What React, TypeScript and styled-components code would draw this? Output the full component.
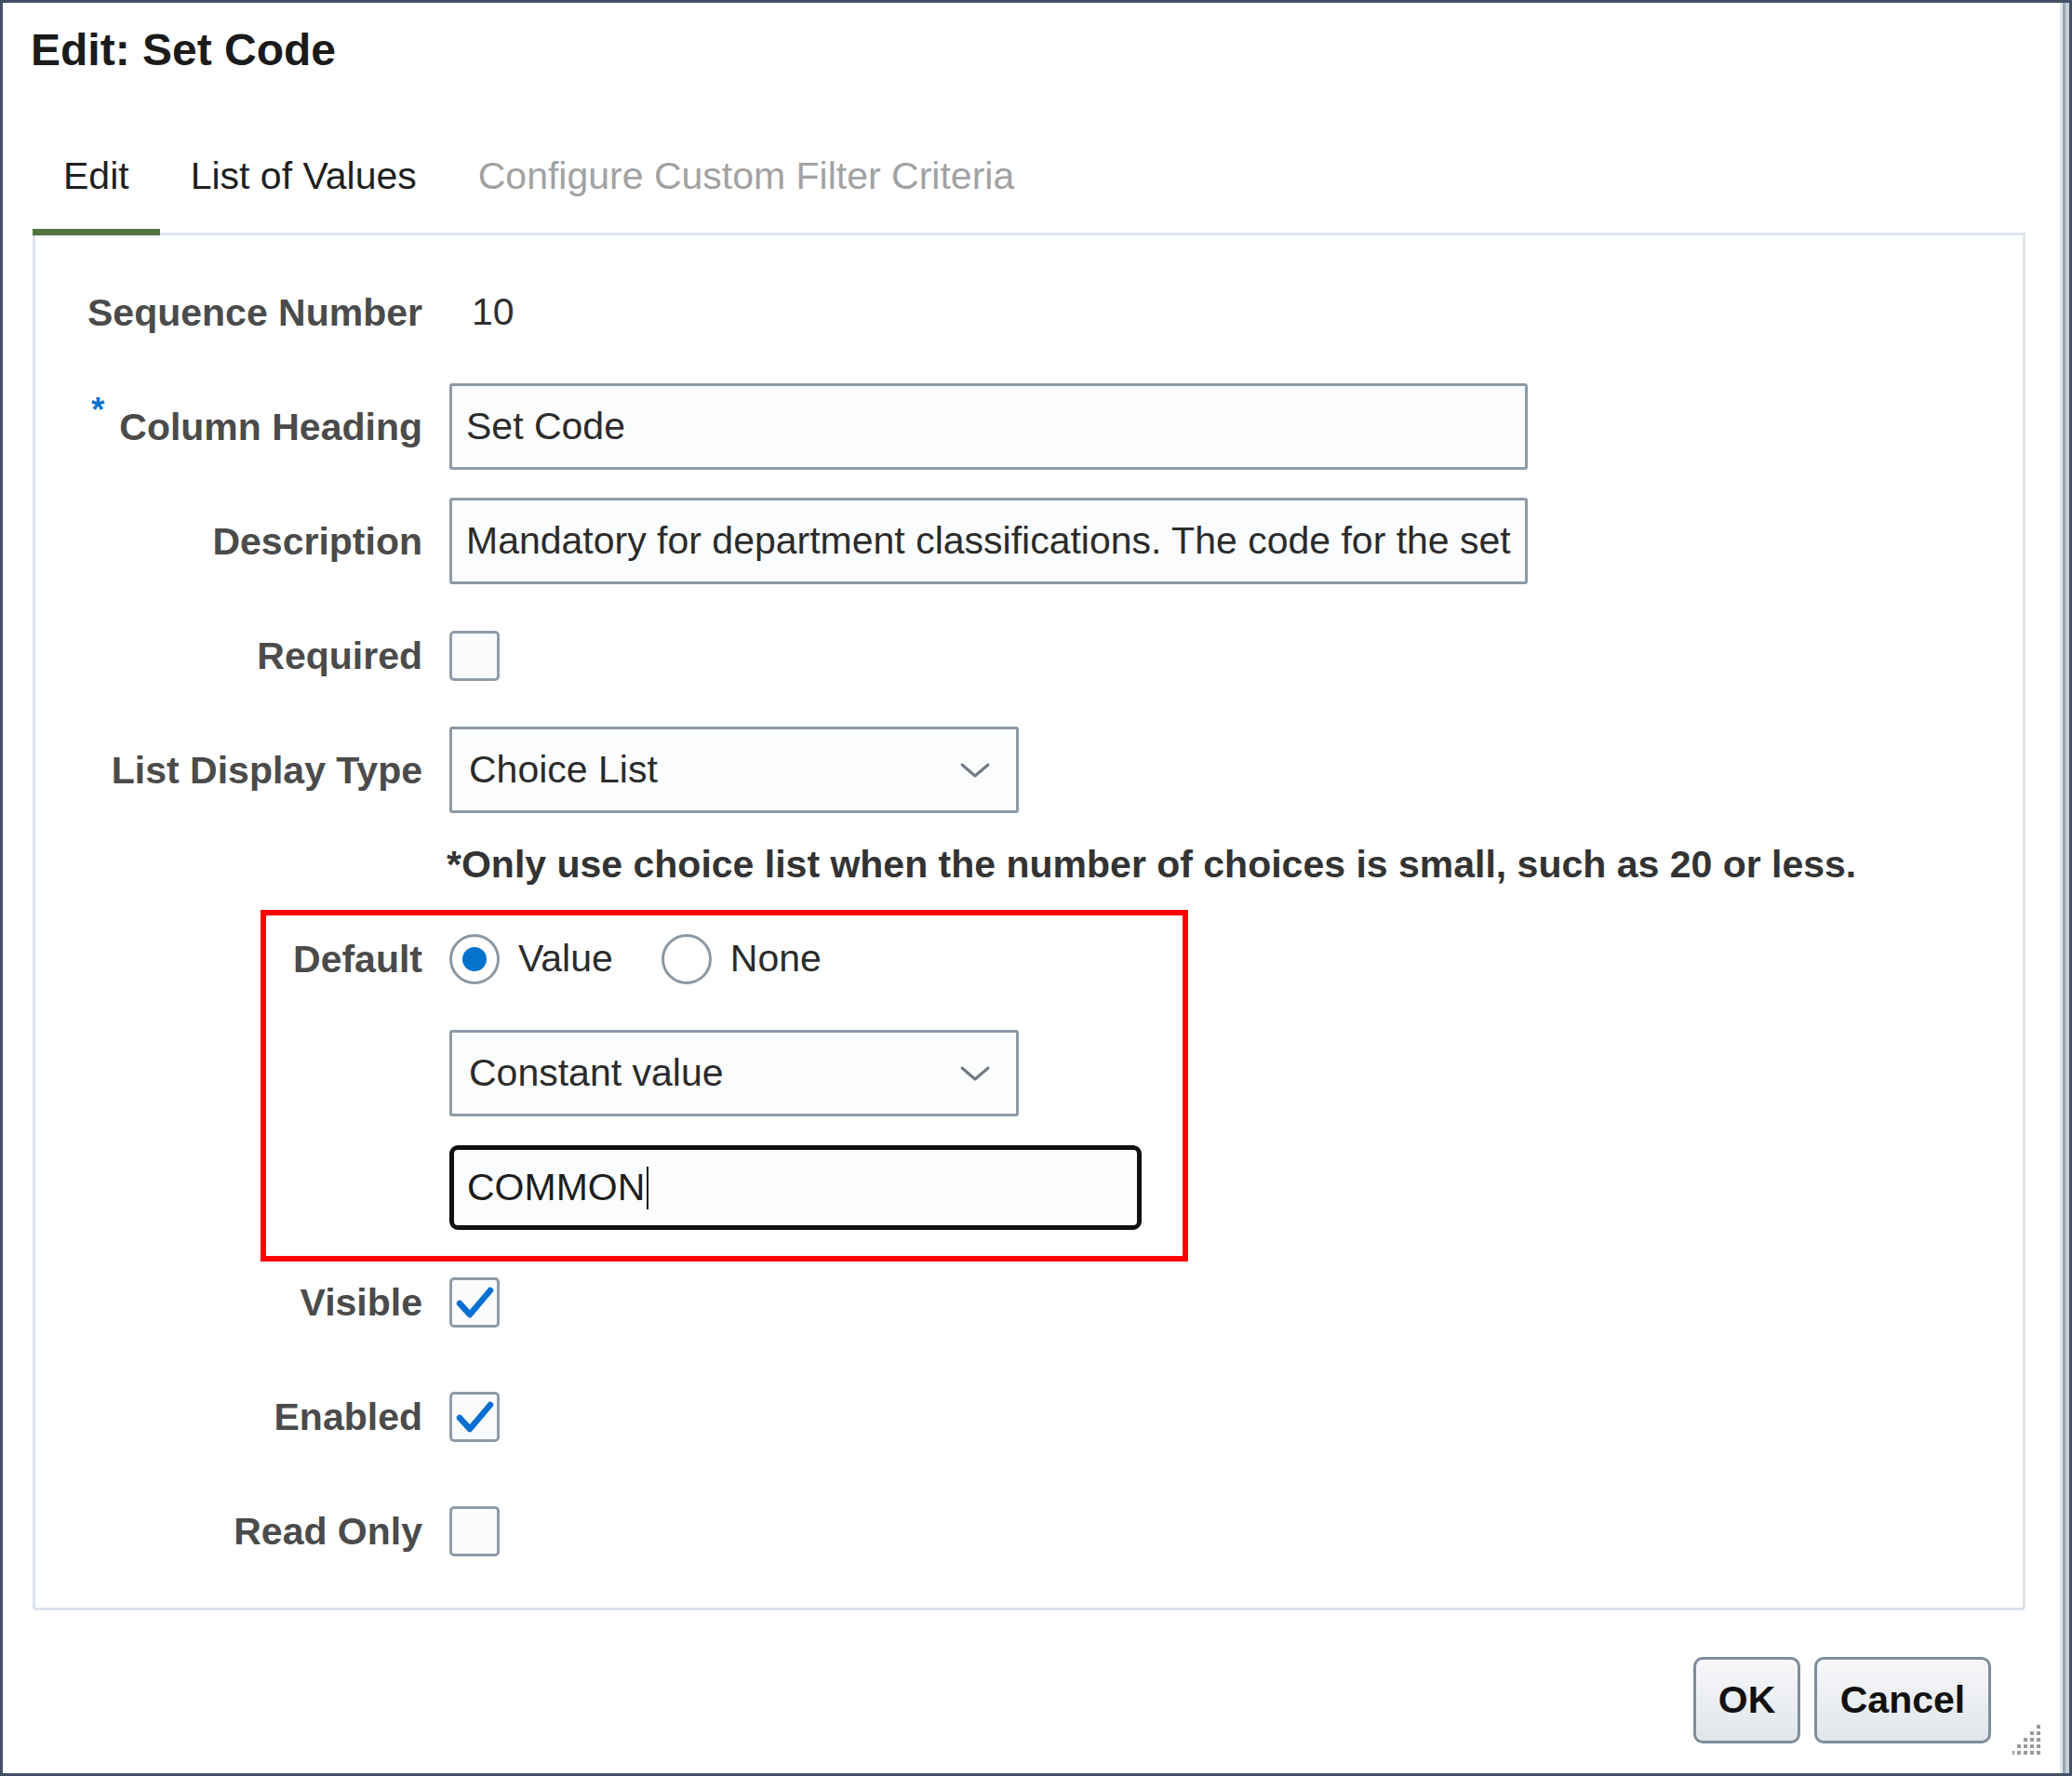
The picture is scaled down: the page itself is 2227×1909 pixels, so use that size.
import React from "react";
import styled, { createGlobalStyle } from "styled-components";

const GlobalStyle = createGlobalStyle`
  html, body {
    margin: 0;
    padding: 0;
    background: #ffffff;
  }
  body {
    font-family: "Liberation Sans", Arial, sans-serif;
  }
`;

const tabs = [
  { label: "Edit", active: true, disabled: false },
  { label: "List of Values", active: false, disabled: false },
  { label: "Configure Custom Filter Criteria", active: false, disabled: true }
];

const App = () => {
  return (
    <>
      <GlobalStyle />
      <Frame>
        <Title>Edit: Set Code</Title>

        <TabBar>
          {tabs.map((tab) => (
            <Tab key={tab.label} $active={tab.active} $disabled={tab.disabled}>
              {tab.label}
            </Tab>
          ))}
        </TabBar>

        <Panel>
          <Row>
            <Label>Sequence Number</Label>
            <Value>10</Value>
          </Row>

          <Row>
            <Label>
              <Required>*</Required>Column Heading
            </Label>
            <TextBox>Set Code</TextBox>
          </Row>

          <Row>
            <Label>Description</Label>
            <TextBox>
              Mandatory for department classifications. The code for the set
            </TextBox>
          </Row>

          <Row>
            <Label>Required</Label>
            <Checkbox checked={false} />
          </Row>

          <Row>
            <Label>List Display Type</Label>
            <Select>
              Choice List
              <Chevron />
            </Select>
          </Row>

          <NoteRow>
            <Label />
            <Note>
              *Only use choice list when the number of choices is small, such as
              20 or less.
            </Note>
          </NoteRow>

          {/* 빨간 박스로 강조된 기본값 영역 */}
          <DefaultGroup>
            <Highlight />
            <Row>
              <Label>Default</Label>
              <RadioGroup>
                <RadioOption>
                  <RadioCircle $selected />
                  Value
                </RadioOption>
                <RadioOption>
                  <RadioCircle $selected={false} />
                  None
                </RadioOption>
              </RadioGroup>
            </Row>
            <Row>
              <Label />
              <Select>
                Constant value
                <Chevron />
              </Select>
            </Row>
            <Row>
              <Label />
              <FocusedInput>
                COMMON
                <Caret />
              </FocusedInput>
            </Row>
          </DefaultGroup>

          <Row>
            <Label>Visible</Label>
            <Checkbox checked />
          </Row>

          <Row>
            <Label>Enabled</Label>
            <Checkbox checked />
          </Row>

          <Row>
            <Label>Read Only</Label>
            <Checkbox checked={false} />
          </Row>
        </Panel>

        <Footer>
          <Button $width={115}>OK</Button>
          <Button $width={190}>Cancel</Button>
          <Grip />
        </Footer>
      </Frame>
    </>
  );
};

export default App;

const Chevron = () => (
  <svg width="34" height="20" viewBox="0 0 34 20">
    <polyline
      points="3,4 17,16 31,4"
      fill="none"
      stroke="#6f7a85"
      strokeWidth="3"
      strokeLinecap="round"
      strokeLinejoin="round"
    />
  </svg>
);

const Checkbox = ({ checked }: { checked: boolean }) => (
  <CheckBoxBox>
    {checked && (
      <svg width="48" height="48" viewBox="0 0 48 48">
        <polyline
          points="8,25 19,37 41,11"
          fill="none"
          stroke="#0a6fd2"
          strokeWidth="6.5"
          strokeLinecap="round"
          strokeLinejoin="round"
        />
      </svg>
    )}
  </CheckBoxBox>
);

// 리사이즈 손잡이 점
const Grip = () => {
  const dots: { x: number; y: number }[] = [];
  for (let row = 0; row < 5; row++) {
    for (let col = 0; col <= row; col++) {
      dots.push({ x: 28 - col * 7, y: 2 + row * 7 });
    }
  }
  return (
    <GripBox>
      <svg width="31" height="33" viewBox="0 0 31 33">
        {dots.map((d, i) => (
          <rect key={i} x={d.x - 2} y={d.y - 2} width="4" height="4" fill="#9a9a9a" />
        ))}
      </svg>
    </GripBox>
  );
};

const Frame = styled.div`
  box-sizing: border-box;
  width: 2227px;
  height: 1909px;
  border: 3px solid #435064;
  padding-right: 10px;
  display: flex;
  flex-direction: column;
  background: linear-gradient(
    to right,
    #ffffff calc(100% - 10px),
    #e1e6eb calc(100% - 10px),
    #e1e6eb calc(100% - 7px),
    #98a6b4 calc(100% - 7px),
    #98a6b4 calc(100% - 4px),
    #c6ced6 calc(100% - 4px)
  );
`;

const Title = styled.h1`
  margin: 23px 0 0 30px;
  font-size: 48px;
  line-height: 56px;
  font-weight: 700;
  color: #1b1b1b;
`;

const TabBar = styled.div`
  display: flex;
  margin: 83px 0 0 32px;
  position: relative;
  z-index: 1;
`;

const Tab = styled.div<{ $active: boolean; $disabled: boolean }>`
  padding: 0 33px 33px;
  font-size: 41px;
  line-height: 48px;
  color: ${({ $disabled }) => ($disabled ? "#a2a2a2" : "#1f1f1f")};
  border-bottom: 7px solid ${({ $active }) => ($active ? "#517540" : "transparent")};
`;

const Panel = styled.div`
  box-sizing: border-box;
  width: 2142px;
  margin: -3px 0 0 32px;
  border: 3px solid #dde4eb;
  border-radius: 0 0 4px 4px;
  padding: 36px 0 36px;
  display: flex;
  flex-direction: column;
  gap: 30px;
`;

const Row = styled.div`
  display: grid;
  grid-template-columns: 416px auto;
  column-gap: 29px;
  align-items: center;
  justify-items: start;
  min-height: 93px;
`;

const NoteRow = styled(Row)`
  min-height: 50px;
`;

const Label = styled.div`
  justify-self: end;
  font-size: 41px;
  line-height: 48px;
  font-weight: 700;
  color: #4b4b4b;
  white-space: nowrap;
`;

const Required = styled.span`
  color: #0572ce;
  font-size: 36px;
  line-height: 0;
  vertical-align: 20px;
  margin-right: 16px;
`;

const Value = styled.div`
  margin-left: 24px;
  font-size: 41px;
  color: #2e2e2e;
`;

const TextBox = styled.div`
  box-sizing: border-box;
  width: 1159px;
  height: 93px;
  padding: 0 15px;
  display: flex;
  align-items: center;
  border: 3px solid #8d9aa6;
  border-radius: 3px;
  background: #fbfcfd;
  font-size: 41px;
  color: #2b2b2b;
  white-space: nowrap;
  overflow: hidden;
`;

const Select = styled(TextBox)`
  width: 612px;
  padding: 0 27px 0 18px;
  justify-content: space-between;
`;

const CheckBoxBox = styled.div`
  box-sizing: border-box;
  width: 54px;
  height: 54px;
  border: 3px solid #8f9ca8;
  border-radius: 5px;
  background: #f9fbfd;
  display: flex;
  align-items: center;
  justify-content: center;
`;

const Note = styled.div`
  margin-left: -3px;
  font-size: 41px;
  line-height: 50px;
  font-weight: 700;
  color: #333333;
  white-space: nowrap;
`;

const DefaultGroup = styled.div`
  position: relative;
  display: flex;
  flex-direction: column;
  gap: 30px;
`;

const Highlight = styled.div`
  position: absolute;
  left: 242px;
  top: -6px;
  width: 997px;
  height: 378px;
  box-sizing: border-box;
  border: 6px solid #ff0000;
  pointer-events: none;
`;

const RadioGroup = styled.div`
  display: flex;
  align-items: center;
  gap: 52px;
`;

const RadioOption = styled.div`
  display: flex;
  align-items: center;
  gap: 20px;
  font-size: 41px;
  color: #2b2b2b;
`;

const RadioCircle = styled.span<{ $selected: boolean }>`
  box-sizing: border-box;
  width: 54px;
  height: 54px;
  border: 3px solid #8b98a3;
  border-radius: 50%;
  background: #ffffff;
  display: flex;
  align-items: center;
  justify-content: center;

  &::after {
    content: "";
    width: 26px;
    height: 26px;
    border-radius: 50%;
    background: ${({ $selected }) => ($selected ? "#0572ce" : "transparent")};
  }
`;

const FocusedInput = styled.div`
  box-sizing: border-box;
  width: 744px;
  height: 91px;
  padding: 0 14px;
  display: flex;
  align-items: center;
  border: 5px solid #111111;
  border-radius: 9px;
  background: #fbfcfd;
  font-size: 41px;
  color: #1e1e1e;
`;

const Caret = styled.span`
  display: inline-block;
  width: 2px;
  height: 46px;
  margin-left: 2px;
  background: #111111;
`;

const Footer = styled.div`
  flex: 1;
  display: flex;
  justify-content: flex-end;
  align-items: flex-end;
  gap: 15px;
  padding: 0 20px 19px 0;
`;

const Button = styled.button<{ $width: number }>`
  box-sizing: border-box;
  width: ${({ $width }) => `${$width}px`};
  height: 93px;
  margin-bottom: 13px;
  border: 3px solid #7e8d9b;
  border-radius: 10px;
  background: linear-gradient(#f6f7f9, #e1e5e9);
  font-family: "Liberation Sans", Arial, sans-serif;
  font-size: 41px;
  font-weight: 700;
  color: #111111;
  padding: 0;
`;

const GripBox = styled.div`
  margin-left: 8px;
  display: flex;
`;
